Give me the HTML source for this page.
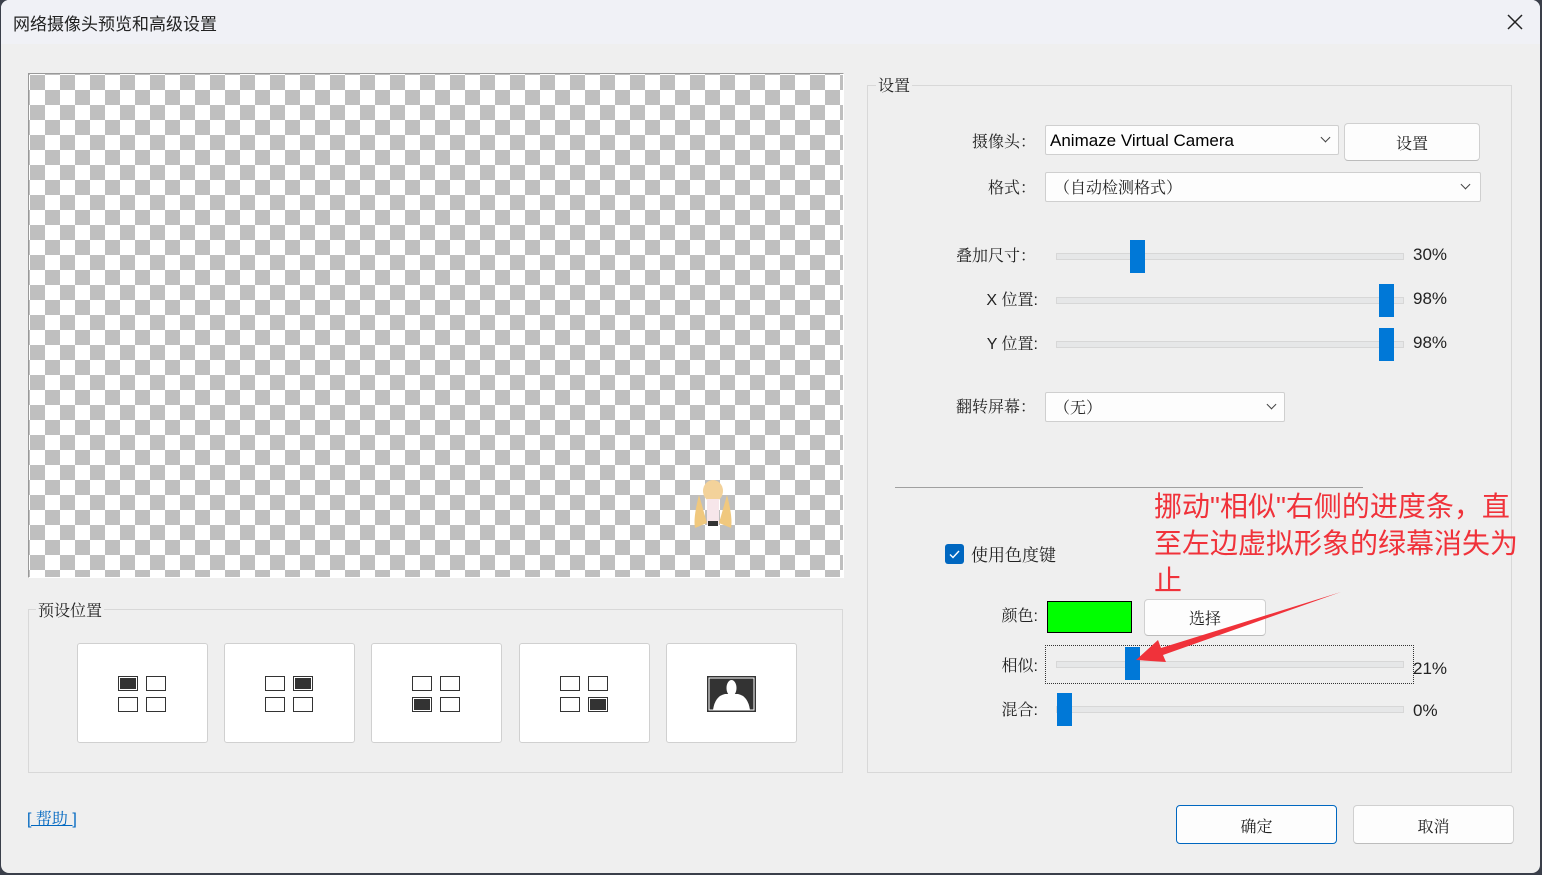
<!DOCTYPE html>
<html><head><meta charset="utf-8"><style>
body{margin:0;width:1542px;height:875px;background:#3a3f4a;overflow:hidden;font-family:"Liberation Sans","Noto Sans CJK SC",sans-serif;color:#222}
.win{position:absolute;left:1px;top:0;width:1539px;height:873px;background:#efefef;border-radius:8px;overflow:hidden}
.title{position:absolute;left:0;top:0;width:100%;height:44px;background:#f0f1f6;font-size:17px}
.abs{position:absolute}
.sf{font-family:"Liberation Sans","Noto Serif CJK SC",serif}
.cb{position:absolute;background:#fdfdfd;border:1px solid #cfcfcf;box-sizing:border-box;font-size:16px;border-radius:2px}
.btn{position:absolute;background:#fdfdfd;border:1px solid #d0d0d0;border-bottom-color:#bcbcbc;border-radius:4px;box-sizing:border-box;text-align:center;font-size:16px;font-family:"Liberation Sans","Noto Serif CJK SC",serif}
.track{position:absolute;height:5px;background:#e6e7e8;border:1px solid #d7d7d7;left:1055px;width:346px}
.thumb{position:absolute;width:15px;height:33px;background:#0078d7}
.lbl{position:absolute;font-size:16px;text-align:right;width:120px;font-family:"Liberation Sans","Noto Serif CJK SC",serif}
.pct{position:absolute;font-size:17px;left:1412px}
.grp{position:absolute;border:1px solid #d8d8d8;box-sizing:border-box}
.pb{position:absolute;top:643px;width:131px;height:100px;background:#fff;border:1px solid #d0d0d0;border-radius:3px;box-sizing:border-box}
.q{position:absolute;width:20px;height:15px;border:1px solid #333;box-sizing:border-box;background:#fff}
.q.f{background:#333;box-shadow:inset 0 0 0 1px #fff}
.chev{position:absolute;width:6px;height:6px;border-right:1.3px solid #444;border-bottom:1.3px solid #444;transform:rotate(45deg)}
</style></head><body>
<div class="win">
<div class="title"><span class="abs" style="left:12px;top:10px">网络摄像头预览和高级设置</span>
<svg class="abs" style="left:1505px;top:13px" width="18" height="18"><path d="M2 2L16 16M16 2L2 16" stroke="#222" stroke-width="1.5"/></svg></div>

<div class="abs" style="left:27px;top:73px;width:816px;height:505px;border:1px solid #999;border-right-color:#fff;border-bottom-color:#fff;box-sizing:border-box;background-color:#fff;background-image:linear-gradient(45deg,#bfbfbf 25%,transparent 25%,transparent 75%,#bfbfbf 75%),linear-gradient(45deg,#bfbfbf 25%,transparent 25%,transparent 75%,#bfbfbf 75%);background-size:30px 30px;background-position:-14px 1px,1px 16px"></div>
<svg class="abs" style="left:688px;top:473px" width="48" height="60"><ellipse cx="24" cy="18" rx="10" ry="11" fill="#f3d29a"/><path d="M10 22 Q4 45 6 55 L18 50 Z M38 22 Q44 45 42 55 L30 50Z" fill="#f0c87e"/><rect x="18" y="26" width="12" height="26" fill="#f7e6ea"/><rect x="19" y="48" width="10" height="5" fill="#333"/></svg>

<div class="grp" style="left:27px;top:609px;width:815px;height:164px"></div>
<span class="abs sf" style="left:35px;top:598px;font-size:16px;background:#efefef;padding:0 2px">预设位置</span>
<div class="pb" style="left:76px"><div class="q f" style="left:40px;top:32px"></div><div class="q" style="left:68px;top:32px"></div><div class="q" style="left:40px;top:53px"></div><div class="q" style="left:68px;top:53px"></div></div>
<div class="pb" style="left:223px"><div class="q" style="left:40px;top:32px"></div><div class="q f" style="left:68px;top:32px"></div><div class="q" style="left:40px;top:53px"></div><div class="q" style="left:68px;top:53px"></div></div>
<div class="pb" style="left:370px"><div class="q" style="left:40px;top:32px"></div><div class="q" style="left:68px;top:32px"></div><div class="q f" style="left:40px;top:53px"></div><div class="q" style="left:68px;top:53px"></div></div>
<div class="pb" style="left:518px"><div class="q" style="left:40px;top:32px"></div><div class="q" style="left:68px;top:32px"></div><div class="q" style="left:40px;top:53px"></div><div class="q f" style="left:68px;top:53px"></div></div>
<div class="pb" style="left:665px"><svg class="abs" style="left:40px;top:32px" width="49" height="36"><rect x="0.5" y="0.5" width="48" height="35" fill="#333" stroke="#333"/><rect x="2" y="2" width="45" height="32" fill="#333" stroke="#fff" stroke-width="1"/><ellipse cx="24.5" cy="12" rx="5" ry="8" fill="#fff"/><path d="M6 34 Q8 20 18 18 L31 18 Q41 20 43 34Z" fill="#fff"/></svg></div>

<div class="grp" style="left:866px;top:85px;width:645px;height:688px"></div>
<span class="abs sf" style="left:875px;top:73px;font-size:16px;background:#efefef;padding:0 2px">设置</span>

<div class="lbl" style="left:915px;top:129px">摄像头：</div>
<div class="cb" style="left:1044px;top:125px;width:294px;height:30px"><span class="abs" style="left:4px;top:5px;font-size:17px;color:#000">Animaze Virtual Camera</span><div class="chev" style="left:276px;top:8px"></div></div>
<div class="btn" style="left:1343px;top:123px;width:136px;height:38px;padding-top:7px">设置</div>
<div class="lbl" style="left:915px;top:175px">格式：</div>
<div class="cb sf" style="left:1044px;top:172px;width:436px;height:30px"><span class="abs" style="left:8px;top:2px">（自动检测格式）</span><div class="chev" style="left:416px;top:8px"></div></div>

<div class="lbl" style="left:915px;top:243px">叠加尺寸：</div>
<div class="track" style="top:253px"></div><div class="thumb" style="left:1129px;top:240px"></div><div class="pct" style="top:245px">30%</div>
<div class="lbl" style="left:917px;top:287px">X 位置:</div>
<div class="track" style="top:297px"></div><div class="thumb" style="left:1378px;top:284px"></div><div class="pct" style="top:289px">98%</div>
<div class="lbl" style="left:917px;top:331px">Y 位置:</div>
<div class="track" style="top:341px"></div><div class="thumb" style="left:1378px;top:328px"></div><div class="pct" style="top:333px">98%</div>

<div class="lbl" style="left:915px;top:394px">翻转屏幕：</div>
<div class="cb sf" style="left:1044px;top:392px;width:240px;height:30px"><span class="abs" style="left:8px;top:2px">（无）</span><div class="chev" style="left:222px;top:8px"></div></div>

<div class="abs" style="left:894px;top:487px;width:468px;height:1px;background:#a0a0a0"></div>

<div class="abs" style="left:944px;top:544px;width:19px;height:20px;background:#0067c0;border-radius:3px"><svg width="19" height="20"><path d="M5 10.5L8 13.5L14 7" stroke="#fff" stroke-width="1.4" fill="none"/></svg></div>
<span class="abs sf" style="left:970px;top:541px;font-size:17px">使用色度键</span>

<div class="lbl" style="left:917px;top:603px">颜色:</div>
<div class="abs" style="left:1046px;top:601px;width:85px;height:32px;background:#00ff00;border:1px solid #000;box-sizing:border-box"></div>
<div class="btn" style="left:1143px;top:599px;width:122px;height:37px;padding-top:6px">选择</div>

<div class="abs" style="left:1044px;top:645px;width:369px;height:39px;border:1px dotted #333;box-sizing:border-box"></div>
<div class="lbl" style="left:917px;top:653px">相似:</div>
<div class="track" style="top:661px"></div><div class="thumb" style="left:1124px;top:647px"></div><div class="pct" style="top:659px">21%</div>
<div class="lbl" style="left:917px;top:697px">混合:</div>
<div class="track" style="top:706px"></div><div class="thumb" style="left:1056px;top:693px"></div><div class="pct" style="top:701px">0%</div>

<div class="abs" style="left:1153px;top:488px;font-size:28px;line-height:37px;color:#f0323a;width:368px">挪动"相似"右侧的进度条，直至左边虚拟形象的绿幕消失为止</div>
<svg class="abs" style="left:0;top:0" width="1542" height="875"><path d="M1340 592 L1160 648 L1157 640 L1135 660 L1165 662 L1162 655 Z" fill="#f0323a"/></svg>

<span class="abs sf" style="left:26px;top:806px;font-size:16px;color:#0067c0;text-decoration:underline;white-space:pre">[ 帮助 ]</span>
<div class="btn" style="left:1175px;top:805px;width:161px;height:39px;border:1px solid #0067c0;padding-top:8px">确定</div>
<div class="btn" style="left:1352px;top:805px;width:161px;height:39px;padding-top:8px">取消</div>
</div>
</body></html>
